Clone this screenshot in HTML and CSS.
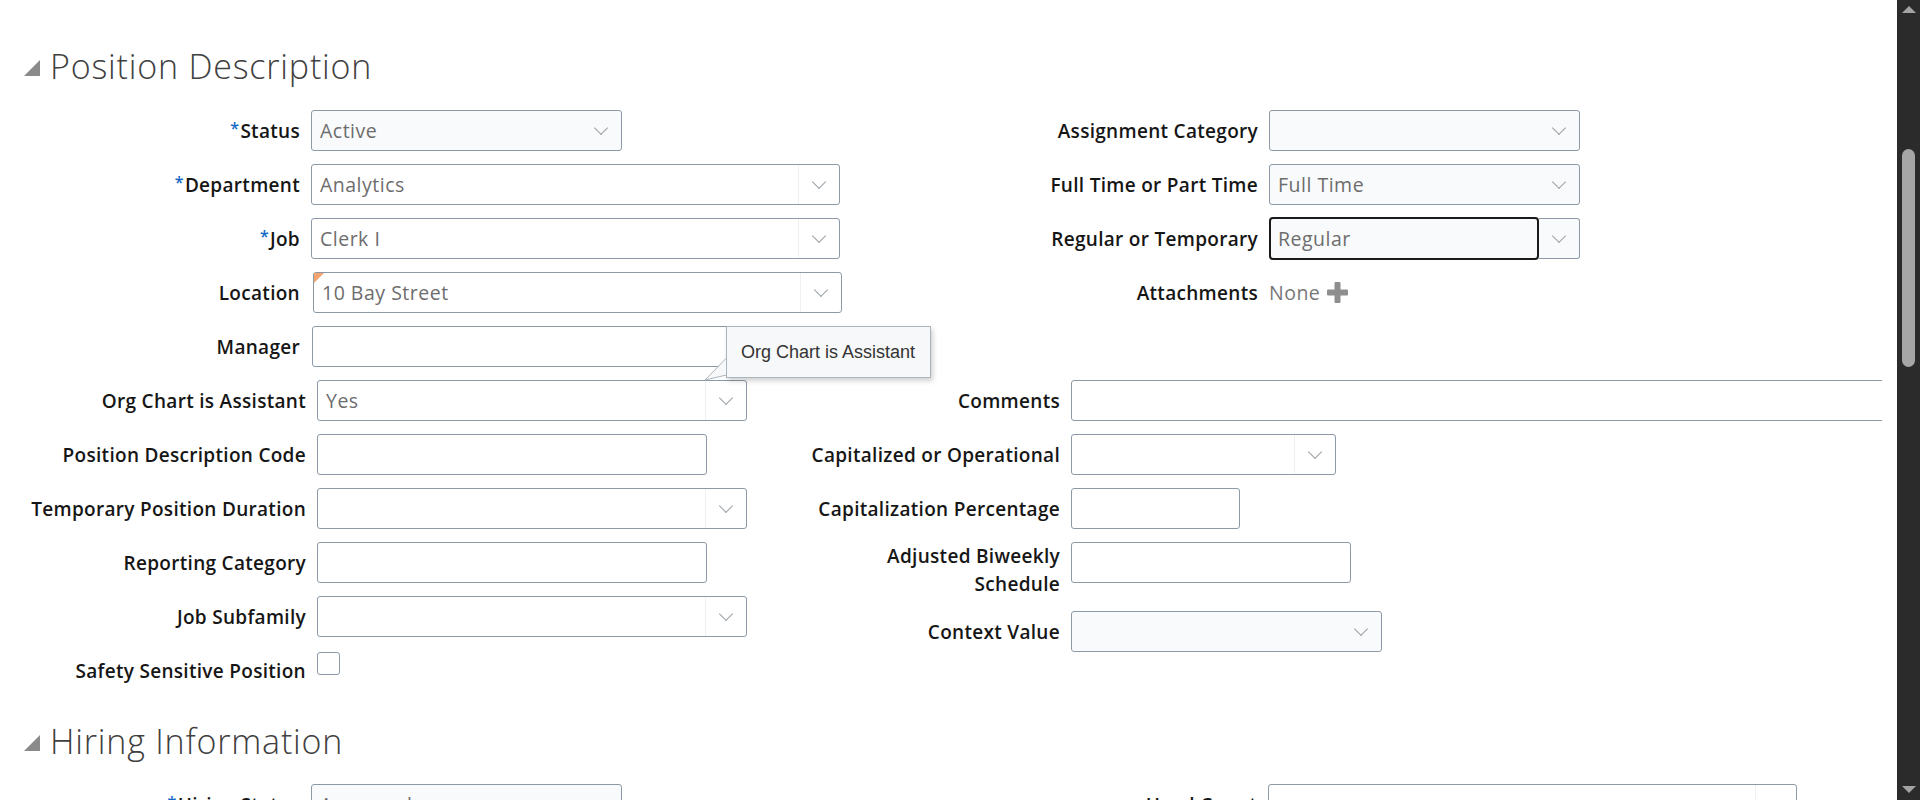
FILE: index.html
```html
<!DOCTYPE html>
<html lang="en">
<head>
	<meta charset="UTF-8">
	<title>Position Description</title>
	<link rel="stylesheet" href="styles.css">
</head>
<body>
<div class="page">
	<div class="main">
		<div class="section-head"><span class="disclose"></span><h2>Position Description</h2></div>

		<div class="group g1">
			<div class="col col-left">
				<div class="row"><span class="lbl"><span class="req">*</span>Status</span>
					<div class="field choice w311"><span class="val">Active</span><span class="chev"></span></div></div>
				<div class="row"><span class="lbl"><span class="req">*</span>Department</span>
					<div class="field combo w529"><span class="val">Analytics</span><span class="chev"></span></div></div>
				<div class="row"><span class="lbl"><span class="req">*</span>Job</span>
					<div class="field combo w529"><span class="val">Clerk I</span><span class="chev"></span></div></div>
				<div class="row"><span class="lbl">Location</span>
					<div class="field combo w529 changed shift2"><span class="val">10 Bay Street</span><span class="chev"></span></div></div>
				<div class="row"><span class="lbl">Manager</span>
					<div class="field combo w528 shift1"><span class="val"></span><span class="chev"></span></div></div>
			</div>
			<div class="col col-right">
				<div class="row"><span class="lbl">Assignment Category</span>
					<div class="field choice w311"><span class="val"></span><span class="chev"></span></div></div>
				<div class="row"><span class="lbl">Full Time or Part Time</span>
					<div class="field choice w311"><span class="val">Full Time</span><span class="chev"></span></div></div>
				<div class="row"><span class="lbl">Regular or Temporary</span>
					<div class="field split w311"><span class="focus"><span class="val">Regular</span></span><span class="chev"></span></div></div>
				<div class="row"><span class="lbl">Attachments</span>
					<span class="none">None</span>
					<svg class="plus" width="21" height="21" viewBox="0 0 21 21"><rect x="7.5" y="0" width="6" height="21" rx="1" fill="#8e8e8e"/><rect x="0" y="7.5" width="21" height="6" rx="1" fill="#8e8e8e"/></svg>
				</div>
			</div>
		</div>

		<div class="group g2">
			<div class="col col-left">
				<div class="row"><span class="lbl">Org Chart is Assistant</span>
					<div class="field combo w430"><span class="val">Yes</span><span class="chev"></span></div></div>
				<div class="row"><span class="lbl">Position Description Code</span>
					<div class="field w390"></div></div>
				<div class="row"><span class="lbl">Temporary Position Duration</span>
					<div class="field combo w430"><span class="val"></span><span class="chev"></span></div></div>
				<div class="row"><span class="lbl">Reporting Category</span>
					<div class="field w390"></div></div>
				<div class="row"><span class="lbl">Job Subfamily</span>
					<div class="field combo w430"><span class="val"></span><span class="chev"></span></div></div>
				<div class="row row-check"><span class="lbl">Safety Sensitive Position</span>
					<span class="check"></span></div>
			</div>
			<div class="col col-right">
				<div class="row"><span class="lbl">Comments</span>
					<div class="field w900"></div></div>
				<div class="row"><span class="lbl">Capitalized or Operational</span>
					<div class="field combo w265"><span class="val"></span><span class="chev"></span></div></div>
				<div class="row"><span class="lbl">Capitalization Percentage</span>
					<div class="field w169"></div></div>
				<div class="row row-top"><span class="lbl">Adjusted Biweekly<br>Schedule</span>
					<div class="field w280"></div></div>
				<div class="row"><span class="lbl">Context Value</span>
					<div class="field choice w311"><span class="val"></span><span class="chev"></span></div></div>
			</div>
		</div>

		<div class="section-head head2"><span class="disclose"></span><h2>Hiring Information</h2></div>

		<div class="group g3">
			<div class="col col-left">
				<div class="row"><span class="lbl"><span class="req">*</span>Hiring Status</span>
					<div class="field choice w311"><span class="val">Approved</span><span class="chev"></span></div></div>
			</div>
			<div class="col col-right">
				<div class="row"><span class="lbl">Head Count</span>
					<div class="field combo w529"><span class="val"></span><span class="chev"></span></div></div>
			</div>
		</div>

		<div class="tip">Org Chart is Assistant</div>
		<svg class="tip-tail" width="23" height="26" viewBox="0 0 23 26"><polygon points="22.5,2 1,24 22.5,19" fill="#f7f8f9" stroke="#a9b4bd" stroke-width="1"/></svg>
	</div>

	<div class="scrollbar">
		<span class="arrow up"></span>
		<span class="thumb"></span>
		<span class="arrow down"></span>
	</div>
</div>
</body>
</html>
```

FILE: styles.css
```css
html,body{
	margin:0;padding:0;background:#fff;
	font-family:"Open Sans","Noto Sans",sans-serif;color:#1b1b1b;
}
.page{
	display:flex;height:800px;overflow:hidden;
}
.main{
	flex:1;min-width:0;position:relative;overflow:hidden;
	margin-right:15px;padding-top:42px;
}

/* section header */
.section-head{
	display:flex;align-items:center;height:48px;padding-left:24px;
}
.disclose{
	width:0;height:0;flex:none;
	border-style:solid;border-width:0 0 16px 16px;
	border-color:transparent transparent #8a8a8a transparent;
	margin-top:4px;
}
.section-head h2{
	margin:0 0 0 10px;font-size:34px;line-height:48px;font-weight:300;color:#404040;
	letter-spacing:0.8px;
}
.head2{margin-top:26px;}

/* form groups */
.group{display:flex;margin-top:20px;}
.g2{margin-top:13px;}
.g3{margin-top:19px;}
.col{display:flex;flex-direction:column;gap:13px;flex:none;}
.row{display:flex;align-items:center;gap:11px;min-height:41px;}
.row-top{align-items:flex-start;}
.lbl{
	flex:none;text-align:right;font-size:19px;line-height:28px;font-weight:600;color:#161616;
	letter-spacing:0.3px;
}
.req{color:#1467c4;font-size:16px;font-weight:600;vertical-align:top;position:relative;top:-3px;margin-right:1px;}

.g1 .col-left{width:860px;}
.g1 .col-left .lbl{width:300px;}
.g1 .col-right .lbl{width:398px;}
.g2 .col-left{width:760px;}
.g2 .col-left .lbl{width:306px;}
.g2 .col-right .lbl{width:300px;}
.g3 .col-left{width:860px;}
.g3 .col-left .lbl{width:300px;}
.g3 .col-right .lbl{width:397px;}

/* fields */
.field{
	box-sizing:border-box;height:41px;flex:none;position:relative;
	border:1px solid #8b9aa6;border-radius:3px;background:#fff;
	display:flex;align-items:center;
}
.field.choice{background:#f9fafb;}
.val{
	flex:1;padding-left:8px;font-size:19.5px;font-weight:500;color:#6d6d6d;white-space:nowrap;
	letter-spacing:0.5px;
}
.chev{
	flex:none;width:40px;height:100%;display:flex;align-items:center;justify-content:center;
}
.combo .chev{border-left:1px solid #eef1f3;}
.chev::after{
	content:"";width:9px;height:9px;
	border-right:1.2px solid #9ba1a7;border-bottom:1.2px solid #9ba1a7;
	transform:translateY(-3px) rotate(45deg);
}
.shift1{margin-left:1px;}
.shift2{margin-left:2px;}
.changed::before{
	content:"";position:absolute;left:0;top:0;width:0;height:0;
	border-style:solid;border-width:10px 10px 0 0;
	border-color:#f4a46e transparent transparent transparent;
}
.split{border:none;background:transparent;}
.split .focus{
	flex:none;width:270px;height:43px;box-sizing:border-box;margin:-1px 0;
	border:2px solid #1a1a1a;border-radius:4px;background:#f9fafb;
	display:flex;align-items:center;
}
.split .focus .val{padding-left:7px;}
.split .chev{
	box-sizing:border-box;width:41px;height:41px;background:#f9fafb;
	border:1px solid #8b9aa6;border-left:none;border-radius:0 3px 3px 0;
}

.w169{width:169px;}
.w265{width:265px;}
.w280{width:280px;}
.w311{width:311px;}
.w390{width:390px;}
.w430{width:430px;}
.w528{width:528px;}
.w529{width:529px;}
.w900{width:900px;}

.none{font-size:19.5px;font-weight:500;color:#777;letter-spacing:0.5px;}
.plus{margin-left:-4px;}

.row-check{align-items:flex-start;}
.row-check .lbl{padding-top:7px;}
.check{
	width:23px;height:23px;box-sizing:border-box;margin-top:2px;flex:none;
	border:1px solid #8b9aa6;border-radius:3px;background:#fff;
}

/* tooltip */
.tip{
	position:absolute;left:726px;top:326px;width:205px;height:52px;box-sizing:border-box;
	padding-left:14px;line-height:50px;
	font-family:"Liberation Sans",Arial,sans-serif;font-size:18px;color:#333;
	background:#f7f8f9;border:1px solid #a9b4bd;
	box-shadow:2px 3px 5px rgba(0,0,0,.18);
}
.tip-tail{position:absolute;left:704px;top:356px;}

/* scrollbar */
.scrollbar{
	width:23px;flex:none;background:#2b2b2b;
	display:flex;flex-direction:column;align-items:center;
}
.arrow{width:0;height:0;border-style:solid;}
.arrow.up{margin-top:6px;border-width:0 7px 7px 7px;border-color:transparent transparent #a3a3a3 transparent;}
.arrow.down{margin-top:auto;margin-bottom:7px;border-width:7px 7px 0 7px;border-color:#a3a3a3 transparent transparent transparent;}
.thumb{width:13px;height:218px;margin-top:136px;border-radius:7px;background:#a6a6a6;}
```
